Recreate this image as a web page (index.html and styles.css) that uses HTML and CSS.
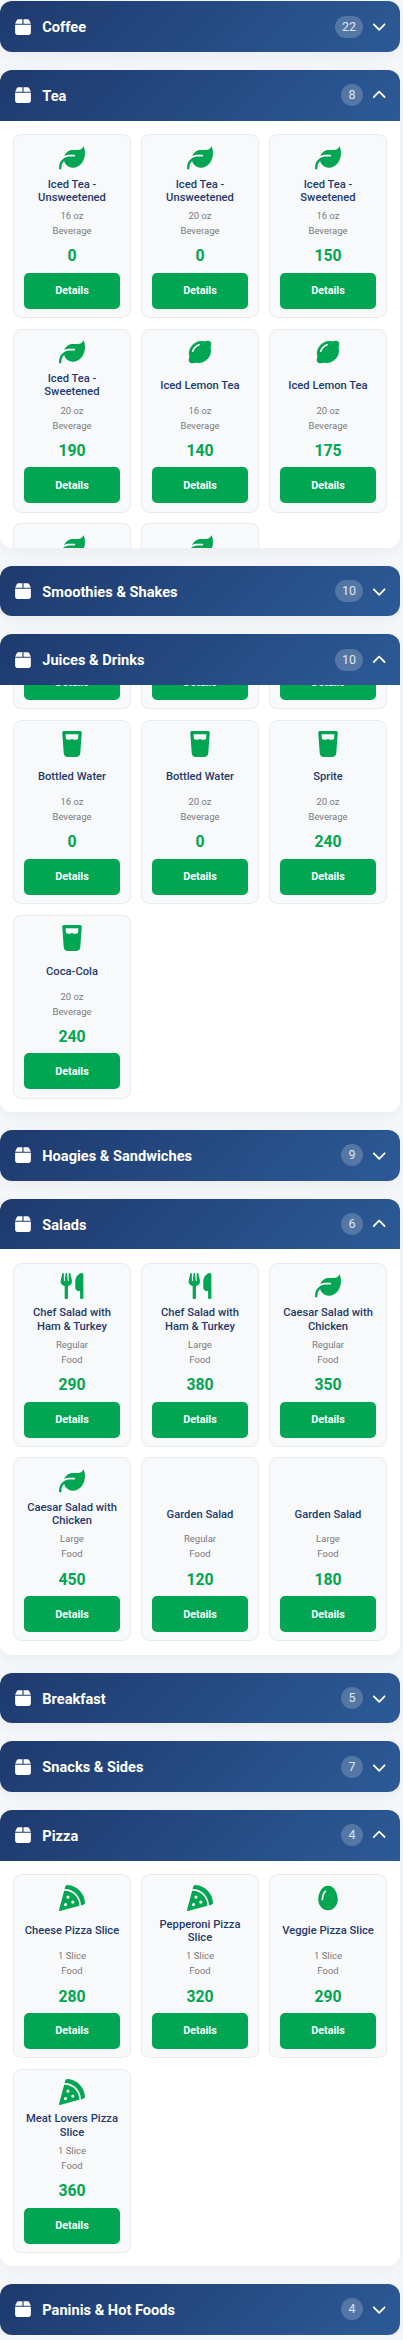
FILE: index.html
```html
<!DOCTYPE html>
<html lang="en">
<head>
    <meta charset="UTF-8">
    <meta name="viewport" content="width=device-width, initial-scale=1.0">
    <title>Menu Nutrition</title>
    <link rel="stylesheet" href="styles.css">
</head>
<body>
    <!-- icon sprite -->
    <svg class="sprite" xmlns="http://www.w3.org/2000/svg">
        <symbol id="i-box" viewBox="0 0 448 512"><path d="M50.7 58.5L0 160H208V32H93.7C75.5 32 58.9 42.3 50.7 58.5zM240 160H448L397.3 58.5C389.1 42.3 372.5 32 354.3 32H240V160zm208 32H0V416c0 35.3 28.7 64 64 64H384c35.3 0 64-28.7 64-64V192z"/></symbol>
        <symbol id="i-down" viewBox="0 0 512 512"><path d="M233.4 406.6c12.5 12.5 32.8 12.5 45.3 0l192-192c12.5-12.5 12.5-32.8 0-45.3s-32.8-12.5-45.3 0L256 338.7 86.6 169.4c-12.5-12.5-32.8-12.5-45.3 0s-12.5 32.8 0 45.3l192 192z"/></symbol>
        <symbol id="i-up" viewBox="0 0 512 512"><path d="M233.4 105.4c12.5-12.5 32.8-12.5 45.3 0l192 192c12.5 12.5 12.5 32.8 0 45.3s-32.8 12.5-45.3 0L256 173.3 86.6 342.6c-12.5 12.5-32.8 12.5-45.3 0s-12.5-32.8 0-45.3l192-192z"/></symbol>
        <symbol id="i-leaf" viewBox="0 0 512 512"><path d="M272 96c-78.6 0-145.1 51.5-167.7 122.5c33.6-17 71.5-26.5 111.7-26.5h88c8.8 0 16 7.2 16 16s-7.2 16-16 16H288 216s0 0 0 0c-16.6 0-32.7 1.9-48.3 5.4c-25.9 5.9-49.9 16.4-71.4 30.7c0 0 0 0 0 0C38.3 298.8 0 364.9 0 440v16c0 13.3 10.7 24 24 24s24-10.7 24-24V440c0-48.7 20.7-92.5 53.8-123.2C121.6 392.3 190.3 448 272 448l1 0c132.1-.7 239-130.9 239-291.4c0-42.6-7.5-83.1-21.1-119.6c-2.6-6.9-12.7-6.6-16.2 0C455.9 72.6 418.4 96 376 96L272 96z"/></symbol>
        <symbol id="i-lemon" viewBox="0 0 448 512"><path d="M448 96c0-35.3-28.7-64-64-64c-6.6 0-13 1-19.3 2.9c-22.5 7-48.1 14.9-71 9c-75.2-19.1-156.4 11-213.7 68.3S-7.2 250.2 11.9 325.4c5.8 22.9-2 48.4-9 71C1 402.5 0 408.9 0 415.5c0 35.3 28.7 64 64 64c6.6 0 13-1 19-2.9c22.5-7 48.1-14.9 71-9c75.2 19.1 156.4-11 213.7-68.3s87.5-138.5 68.3-213.7c-5.8-22.9 2-48.4 9-71c1.9-6 2.9-12.4 2.9-19.1zM212.5 127.4c-54.6 16-101.1 62.5-117.1 117.1c-2.5 8.5-11.4 13.4-19.9 10.9s-13.4-11.4-10.9-19.9c19-64.6 73.1-118.7 137.7-137.7c8.5-2.5 17.4 2.4 19.9 10.9s-2.4 17.4-10.9 19.9z"/></symbol>
        <symbol id="i-glass" viewBox="0 0 384 512"><path d="M32 0C23.1 0 14.6 3.7 8.6 10.2S-.6 25.4 .1 34.3L28.9 437.7c3 41.9 37.8 74.3 79.8 74.3H275.3c42 0 76.8-32.4 79.8-74.3L383.9 34.3c.6-8.9-2.4-17.6-8.5-24.1S360.9 0 352 0H32zM73 156.5L66.4 64H317.6L311 156.5l-24.2 12.1c-19.4 9.7-42.2 9.7-61.6 0c-20.9-10.5-45.5-10.5-66.4 0c-19.4 9.7-42.2 9.7-61.6 0L73 156.5z"/></symbol>
        <symbol id="i-utensils" viewBox="0 0 448 512"><path d="M416 0C400 0 288 32 288 176V288c0 35.3 28.7 64 64 64h32V480c0 17.7 14.3 32 32 32s32-14.3 32-32V352 240 32c0-17.7-14.3-32-32-32zM64 16C64 7.8 57.9 1 49.7 .1S34.2 4.6 32.4 12.5L2.1 148.8C.7 155.1 0 161.5 0 167.9c0 45.9 35.1 83.6 80 87.7V480c0 17.7 14.3 32 32 32s32-14.3 32-32V255.6c44.9-4.1 80-41.8 80-87.7c0-6.4-.7-12.8-2.1-19.1L191.6 12.5c-1.8-8-9.3-13.3-17.4-12.4S160 7.8 160 16V150.2c0 5.4-4.4 9.8-9.8 9.8c-5.1 0-9.3-3.9-9.8-9L127.9 14.6C127.2 6.3 120.3 0 112 0s-15.2 6.3-15.9 14.6L83.7 151c-.5 5.1-4.7 9-9.8 9c-5.4 0-9.8-4.4-9.8-9.8V16zm48.3 152l-.3 0-.3 0 .3-.7 .3 .7z"/></symbol>
        <symbol id="i-pizza" viewBox="0 0 512 512"><path d="M169.7 .9c-22.8-1.6-41.9 14-47.5 34.7L110.4 80c.5 0 1.1 0 1.6 0c176.7 0 320 143.3 320 320c0 .5 0 1.1 0 1.6l44.4-11.8c20.8-5.5 36.3-24.7 34.7-47.5C498.5 159.5 352.5 13.5 169.7 .9zM399.8 410.2c.1-3.4 .2-6.8 .2-10.2c0-159.1-128.9-288-288-288c-3.4 0-6.8 .1-10.2 .2L.5 491.9c-1.5 5.5 .1 11.4 4.1 15.4s9.9 5.6 15.4 4.1L399.8 410.2zM176 208a32 32 0 1 1 0 64 32 32 0 1 1 0-64zm64 128a32 32 0 1 1 64 0 32 32 0 1 1 -64 0zM96 384a32 32 0 1 1 64 0 32 32 0 1 1 -64 0z"/></symbol>
        <symbol id="i-egg" viewBox="0 0 384 512"><path d="M192 496C86 496 0 394 0 288C0 176 64 16 192 16s192 160 192 272c0 106-86 208-192 208zM154.8 134c6.5-6 7-16.1 1-22.6s-16.1-7-22.6-1c-23.9 21.8-41.1 52.7-52.3 84.2C69.7 226.1 64 259.7 64 288c0 8.8 7.2 16 16 16s16-7.2 16-16c0-24.5 5-54.4 15.1-82.8c10.1-28.5 25-54.1 43.7-71.2z"/></symbol>
    </svg>

    <div class="menu">
        <section class="category">
            <div class="category-header">
                <svg class="box-icon"><use href="#i-box"/></svg>
                <h2>Coffee</h2>
                <span class="count">22</span>
                <svg class="chevron"><use href="#i-down"/></svg>
            </div>
        </section>

        <section class="category">
            <div class="category-header">
                <svg class="box-icon"><use href="#i-box"/></svg>
                <h2>Tea</h2>
                <span class="count">8</span>
                <svg class="chevron"><use href="#i-up"/></svg>
            </div>
            <div class="category-body clipped">
                <div class="item-grid">
                    <div class="item-card">
                        <svg class="item-icon"><use href="#i-leaf"/></svg>
                        <h3>Iced Tea - Unsweetened</h3>
                        <p class="meta">16 oz</p>
                        <p class="meta">Beverage</p>
                        <div class="calories">0</div>
                        <button class="details-btn">Details</button>
                    </div>
                    <div class="item-card">
                        <svg class="item-icon"><use href="#i-leaf"/></svg>
                        <h3>Iced Tea - Unsweetened</h3>
                        <p class="meta">20 oz</p>
                        <p class="meta">Beverage</p>
                        <div class="calories">0</div>
                        <button class="details-btn">Details</button>
                    </div>
                    <div class="item-card">
                        <svg class="item-icon"><use href="#i-leaf"/></svg>
                        <h3>Iced Tea - Sweetened</h3>
                        <p class="meta">16 oz</p>
                        <p class="meta">Beverage</p>
                        <div class="calories">150</div>
                        <button class="details-btn">Details</button>
                    </div>
                    <div class="item-card">
                        <svg class="item-icon"><use href="#i-leaf"/></svg>
                        <h3>Iced Tea - Sweetened</h3>
                        <p class="meta">20 oz</p>
                        <p class="meta">Beverage</p>
                        <div class="calories">190</div>
                        <button class="details-btn">Details</button>
                    </div>
                    <div class="item-card">
                        <svg class="item-icon"><use href="#i-lemon"/></svg>
                        <h3>Iced Lemon Tea</h3>
                        <p class="meta">16 oz</p>
                        <p class="meta">Beverage</p>
                        <div class="calories">140</div>
                        <button class="details-btn">Details</button>
                    </div>
                    <div class="item-card">
                        <svg class="item-icon"><use href="#i-lemon"/></svg>
                        <h3>Iced Lemon Tea</h3>
                        <p class="meta">20 oz</p>
                        <p class="meta">Beverage</p>
                        <div class="calories">175</div>
                        <button class="details-btn">Details</button>
                    </div>
                    <!-- last row runs under the fold of the panel -->
                    <div class="item-card">
                        <svg class="item-icon"><use href="#i-leaf"/></svg>
                    </div>
                    <div class="item-card">
                        <svg class="item-icon"><use href="#i-leaf"/></svg>
                    </div>
                </div>
            </div>
        </section>

        <section class="category">
            <div class="category-header">
                <svg class="box-icon"><use href="#i-box"/></svg>
                <h2>Smoothies &amp; Shakes</h2>
                <span class="count">10</span>
                <svg class="chevron"><use href="#i-down"/></svg>
            </div>
        </section>

        <section class="category">
            <div class="category-header">
                <svg class="box-icon"><use href="#i-box"/></svg>
                <h2>Juices &amp; Drinks</h2>
                <span class="count">10</span>
                <svg class="chevron"><use href="#i-up"/></svg>
            </div>
            <div class="category-body clipped scrolled">
                <div class="item-grid">
                    <div class="item-card end-only"><button class="details-btn">Details</button></div>
                    <div class="item-card end-only"><button class="details-btn">Details</button></div>
                    <div class="item-card end-only"><button class="details-btn">Details</button></div>
                    <div class="item-card">
                        <svg class="item-icon"><use href="#i-glass"/></svg>
                        <h3>Bottled Water</h3>
                        <p class="meta">16 oz</p>
                        <p class="meta">Beverage</p>
                        <div class="calories">0</div>
                        <button class="details-btn">Details</button>
                    </div>
                    <div class="item-card">
                        <svg class="item-icon"><use href="#i-glass"/></svg>
                        <h3>Bottled Water</h3>
                        <p class="meta">20 oz</p>
                        <p class="meta">Beverage</p>
                        <div class="calories">0</div>
                        <button class="details-btn">Details</button>
                    </div>
                    <div class="item-card">
                        <svg class="item-icon"><use href="#i-glass"/></svg>
                        <h3>Sprite</h3>
                        <p class="meta">20 oz</p>
                        <p class="meta">Beverage</p>
                        <div class="calories">240</div>
                        <button class="details-btn">Details</button>
                    </div>
                    <div class="item-card">
                        <svg class="item-icon"><use href="#i-glass"/></svg>
                        <h3>Coca-Cola</h3>
                        <p class="meta">20 oz</p>
                        <p class="meta">Beverage</p>
                        <div class="calories">240</div>
                        <button class="details-btn">Details</button>
                    </div>
                </div>
            </div>
        </section>

        <section class="category">
            <div class="category-header">
                <svg class="box-icon"><use href="#i-box"/></svg>
                <h2>Hoagies &amp; Sandwiches</h2>
                <span class="count">9</span>
                <svg class="chevron"><use href="#i-down"/></svg>
            </div>
        </section>

        <section class="category">
            <div class="category-header">
                <svg class="box-icon"><use href="#i-box"/></svg>
                <h2>Salads</h2>
                <span class="count">6</span>
                <svg class="chevron"><use href="#i-up"/></svg>
            </div>
            <div class="category-body">
                <div class="item-grid">
                    <div class="item-card">
                        <svg class="item-icon"><use href="#i-utensils"/></svg>
                        <h3>Chef Salad with Ham &amp; Turkey</h3>
                        <p class="meta">Regular</p>
                        <p class="meta">Food</p>
                        <div class="calories">290</div>
                        <button class="details-btn">Details</button>
                    </div>
                    <div class="item-card">
                        <svg class="item-icon"><use href="#i-utensils"/></svg>
                        <h3>Chef Salad with Ham &amp; Turkey</h3>
                        <p class="meta">Large</p>
                        <p class="meta">Food</p>
                        <div class="calories">380</div>
                        <button class="details-btn">Details</button>
                    </div>
                    <div class="item-card">
                        <svg class="item-icon"><use href="#i-leaf"/></svg>
                        <h3>Caesar Salad with Chicken</h3>
                        <p class="meta">Regular</p>
                        <p class="meta">Food</p>
                        <div class="calories">350</div>
                        <button class="details-btn">Details</button>
                    </div>
                    <div class="item-card">
                        <svg class="item-icon"><use href="#i-leaf"/></svg>
                        <h3>Caesar Salad with Chicken</h3>
                        <p class="meta">Large</p>
                        <p class="meta">Food</p>
                        <div class="calories">450</div>
                        <button class="details-btn">Details</button>
                    </div>
                    <div class="item-card">
                        <div class="item-icon"></div>
                        <h3>Garden Salad</h3>
                        <p class="meta">Regular</p>
                        <p class="meta">Food</p>
                        <div class="calories">120</div>
                        <button class="details-btn">Details</button>
                    </div>
                    <div class="item-card">
                        <div class="item-icon"></div>
                        <h3>Garden Salad</h3>
                        <p class="meta">Large</p>
                        <p class="meta">Food</p>
                        <div class="calories">180</div>
                        <button class="details-btn">Details</button>
                    </div>
                </div>
            </div>
        </section>

        <section class="category">
            <div class="category-header">
                <svg class="box-icon"><use href="#i-box"/></svg>
                <h2>Breakfast</h2>
                <span class="count">5</span>
                <svg class="chevron"><use href="#i-down"/></svg>
            </div>
        </section>

        <section class="category">
            <div class="category-header">
                <svg class="box-icon"><use href="#i-box"/></svg>
                <h2>Snacks &amp; Sides</h2>
                <span class="count">7</span>
                <svg class="chevron"><use href="#i-down"/></svg>
            </div>
        </section>

        <section class="category">
            <div class="category-header">
                <svg class="box-icon"><use href="#i-box"/></svg>
                <h2>Pizza</h2>
                <span class="count">4</span>
                <svg class="chevron"><use href="#i-up"/></svg>
            </div>
            <div class="category-body">
                <div class="item-grid">
                    <div class="item-card">
                        <svg class="item-icon"><use href="#i-pizza"/></svg>
                        <h3>Cheese Pizza Slice</h3>
                        <p class="meta">1 Slice</p>
                        <p class="meta">Food</p>
                        <div class="calories">280</div>
                        <button class="details-btn">Details</button>
                    </div>
                    <div class="item-card">
                        <svg class="item-icon"><use href="#i-pizza"/></svg>
                        <h3>Pepperoni Pizza Slice</h3>
                        <p class="meta">1 Slice</p>
                        <p class="meta">Food</p>
                        <div class="calories">320</div>
                        <button class="details-btn">Details</button>
                    </div>
                    <div class="item-card">
                        <svg class="item-icon"><use href="#i-egg"/></svg>
                        <h3>Veggie Pizza Slice</h3>
                        <p class="meta">1 Slice</p>
                        <p class="meta">Food</p>
                        <div class="calories">290</div>
                        <button class="details-btn">Details</button>
                    </div>
                    <div class="item-card">
                        <svg class="item-icon"><use href="#i-pizza"/></svg>
                        <h3>Meat Lovers Pizza Slice</h3>
                        <p class="meta">1 Slice</p>
                        <p class="meta">Food</p>
                        <div class="calories">360</div>
                        <button class="details-btn">Details</button>
                    </div>
                </div>
            </div>
        </section>

        <section class="category">
            <div class="category-header">
                <svg class="box-icon"><use href="#i-box"/></svg>
                <h2>Paninis &amp; Hot Foods</h2>
                <span class="count">4</span>
                <svg class="chevron"><use href="#i-down"/></svg>
            </div>
        </section>
    </div>
</body>
</html>
```

FILE: styles.css
```css
body {
    font-family: Roboto, 'Noto Sans', sans-serif;
    background-color: #f5f7fa;
    margin: 0;
    padding: 0;
}

.sprite {
    display: none;
}

.menu {
    display: flex;
    flex-direction: column;
    gap: 18px;
    width: 400px;
    padding-top: 1.3px;
}

.category {
    background-color: white;
    border-radius: 12px;
    box-shadow: 0 4px 15px rgba(0, 0, 0, 0.05);
    overflow: hidden;
}

.category-header {
    display: flex;
    align-items: center;
    height: 50.7px;
    padding: 0 13.8px 0 15.3px;
    background: linear-gradient(135deg, #1e3a6e, #2c5a96);
    color: white;
}

.box-icon {
    width: 16px;
    height: 18px;
    fill: white;
    flex-shrink: 0;
}

.category-header h2 {
    flex: 1;
    margin: 1px 0 0 11px;
    font-size: 14.6px;
    font-weight: 700;
}

.count {
    min-width: 22px;
    height: 22px;
    margin-right: 8.8px;
    padding: 0 7px;
    box-sizing: border-box;
    border-radius: 11px;
    background-color: rgba(255, 255, 255, 0.2);
    color: #dfe7f3;
    font-size: 12.5px;
    line-height: 22px;
    text-align: center;
}

.chevron {
    width: 14.4px;
    height: 14.4px;
    fill: white;
    flex-shrink: 0;
}

.category-body {
    padding: 13.33px;
}

.clipped {
    height: 427px;
    box-sizing: border-box;
    overflow: hidden;
}

/* panel that has been scrolled to its end */
.scrolled {
    display: flex;
    flex-direction: column;
    justify-content: flex-end;
}

.scrolled .item-grid {
    flex-shrink: 0;
}

.item-grid {
    display: grid;
    grid-template-columns: repeat(3, 1fr);
    gap: 10.67px;
}

.item-card {
    display: flex;
    flex-direction: column;
    align-items: center;
    box-sizing: border-box;
    height: 184px;
    padding: 9.6px 9.6px 8.3px;
    background-color: #f8f9fa;
    border: 1px solid #e9ecef;
    border-radius: 8px;
    text-align: center;
}

.end-only {
    justify-content: flex-end;
}

.item-icon {
    width: 26px;
    height: 26px;
    fill: #00a651;
    flex-shrink: 0;
}

.item-card h3 {
    display: flex;
    align-items: center;
    justify-content: center;
    height: 26.4px;
    margin: 7px -1px 4px;
    color: #1e3a6e;
    font-size: 11.2px;
    font-weight: 500;
    line-height: 13.2px;
}

.meta {
    margin: 0;
    color: #7a7a7a;
    font-size: 9.5px;
    line-height: 15px;
}

.calories {
    margin: 7.5px 0 5.3px;
    color: #00a651;
    font-size: 15.8px;
    font-weight: 700;
    line-height: 22px;
}

.details-btn {
    width: 100%;
    height: 36px;
    flex-shrink: 0;
    background-color: #00a651;
    border: none;
    border-radius: 5px;
    color: white;
    font-family: inherit;
    font-size: 10.8px;
    font-weight: 700;
}
```
